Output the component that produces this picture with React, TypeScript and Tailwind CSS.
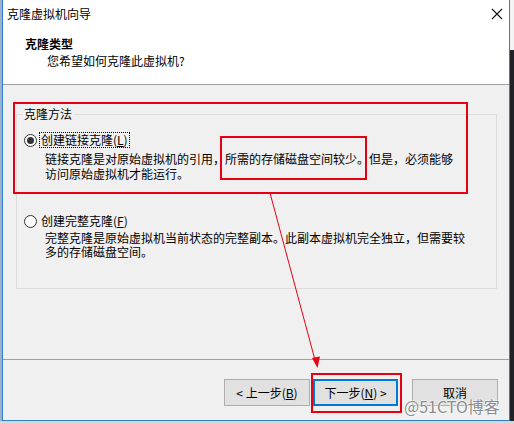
import React from 'react';

const Radio = ({ checked }: { checked?: boolean }) => (
  <span className="flex h-[13px] w-[13px] shrink-0 items-center justify-center rounded-full border border-[#333333] bg-white">
    {checked && <span className="h-[7px] w-[7px] rounded-full bg-[#333333]" />}
  </span>
);

const Btn = ({ children, primary }: { children: React.ReactNode; primary?: boolean }) => (
  <button
    className={
      primary
        ? 'flex h-[27px] w-[85px] items-center justify-center border-2 border-[#0078d7] bg-[#e1e1e1]'
        : 'flex h-[27px] w-[86px] items-center justify-center border border-[#adadad] bg-[#e1e1e1]'
    }
  >
    {children}
  </button>
);

const App: React.FC = () => {
  return (
    <div className="relative flex h-[424px] w-[514px] overflow-hidden bg-[#d6d6d6] font-['Noto_Sans_CJK_SC',sans-serif] text-[12px] leading-[16px] text-black">
      <div className="h-[421px] w-[2px] bg-[#9fb0cc]" />

      <div className="flex h-[421px] w-[508px] flex-col border-x border-b border-[#2f7fd0] bg-[#f0f0f0]">
        {/* title + header */}
        <div className="h-[85px] border-b border-[#a0a0a0] bg-white">
          <div className="flex h-[28px] items-center justify-between pl-[4px] pr-[6px]">
            <span>克隆虚拟机向导</span>
            <svg width="12" height="12" viewBox="0 0 12 12">
              <path d="M1 1 L11 11 M11 1 L1 11" stroke="#111" strokeWidth="1.1" />
            </svg>
          </div>
          <div className="mt-[8px] pl-[22px] font-bold">克隆类型</div>
          <div className="mt-[1px] pl-[44px]">您希望如何克隆此虚拟机?</div>
        </div>

        {/* body */}
        <div className="h-[275px] border-b border-[#a0a0a0] pl-[13px] pt-[21px]">
          <fieldset className="h-[183px] w-[481px] border border-[#dcdcdc]">
            <legend className="ml-[5px] px-[2px] leading-[16px]">克隆方法</legend>

            <div className="ml-[7px] mt-[10px] flex h-[16px] items-center">
              <Radio checked />
              <span className="ml-[2px] border border-dotted border-black px-[1px] leading-[14px]">
                创建链接克隆(<span className="underline">L</span>)
              </span>
            </div>
            <div className="ml-[28px] mt-[3px] w-[410px] leading-[15px]">
              链接克隆是对原始虚拟机的引用，所需的存储磁盘空间较少。但是，必须能够访问原始虚拟机才能运行。
            </div>

            <div className="ml-[7px] mt-[32px] flex h-[16px] items-center">
              <Radio />
              <span className="ml-[3px] px-[1px]">
                创建完整克隆(<span className="underline">F</span>)
              </span>
            </div>
            <div className="ml-[28px] mt-[2px] w-[425px] leading-[14px]">
              完整克隆是原始虚拟机当前状态的完整副本。此副本虚拟机完全独立，但需要较多的存储磁盘空间。
            </div>
          </fieldset>
        </div>

        {/* buttons */}
        <div className="flex flex-1 items-start justify-end pr-[11px] pt-[19px]">
          <Btn>
            &lt; 上一步(<span className="underline">B</span>)
          </Btn>
          <div className="ml-[3px]">
            <Btn primary>
              下一步(<span className="underline">N</span>) &gt;
            </Btn>
          </div>
          <div className="ml-[14px]">
            <Btn>取消</Btn>
          </div>
        </div>
      </div>

      <div className="flex h-[421px] w-[4px] flex-col">
        <div className="h-[50px] bg-[#f4f4f4]" />
        <div className="flex-1 bg-[#1f2328]" />
      </div>

      {/* annotations */}
      <div className="pointer-events-none absolute left-[13px] top-[102px] h-[92px] w-[455px] border-2 border-[#e60012]" />
      <div className="pointer-events-none absolute left-[220px] top-[136px] h-[44px] w-[147px] border-2 border-[#e60012]" />
      <div className="pointer-events-none absolute left-[311px] top-[373px] h-[40px] w-[91px] border-2 border-[#e60012]" />
      <svg className="pointer-events-none absolute left-0 top-0" width="514" height="424">
        <line x1="270" y1="193" x2="315" y2="360" stroke="#e60012" strokeWidth="1" />
        <polygon points="317.5,368 312,358 320,356.5" fill="#e60012" />
      </svg>
      <div className="pointer-events-none absolute left-[404px] top-[396px] text-[16px] leading-[20px] text-[#8a8a8a] [text-shadow:0_0_2px_#fff,0_0_2px_#fff,0_0_1px_#fff]">
        @51CTO博客
      </div>
    </div>
  );
};

export default App;
